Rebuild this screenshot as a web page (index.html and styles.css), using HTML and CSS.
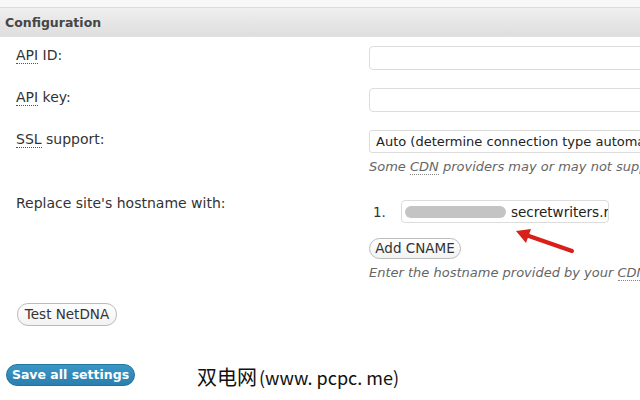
FILE: index.html
```html
<!DOCTYPE html>
<html>
<head>
<meta charset="utf-8">
<link rel="stylesheet" href="styles.css">
</head>
<body>
<div class="page">
  <div class="topstrip"></div>
  <div class="header">Configuration</div>
  <div class="form">
    <div class="row">
      <div class="label"><abbr>API</abbr> ID:</div>
      <div class="field"><div class="input"></div></div>
    </div>
    <div class="row">
      <div class="label"><abbr>API</abbr> key:</div>
      <div class="field"><div class="input"></div></div>
    </div>
    <div class="row">
      <div class="label"><abbr>SSL</abbr> support:</div>
      <div class="field">
        <div class="select">Auto (determine connection type automatically)</div>
        <div class="desc">Some <abbr>CDN</abbr> providers may or may not support SSL connections.</div>
      </div>
    </div>
    <div class="row">
      <div class="label">Replace site's hostname with:</div>
      <div class="field">
        <div class="cname">
          <span class="num">1.</span>
          <div class="cinput"><span class="blur"></span><span class="host">secretwriters.rocks</span></div>
        </div>
        <div class="btn add">Add CNAME</div>
        <div class="desc desc2">Enter the hostname provided by your <abbr>CDN</abbr> provider.</div>
      </div>
    </div>
    <div class="testrow"><span class="btn test">Test NetDNA</span></div>
    <div class="saverow"><span class="save">Save all settings</span></div>
  </div>
  <svg class="arrow" width="640" height="400" viewBox="0 0 640 400">
    <line x1="572" y1="251" x2="526" y2="235" stroke="#d81f1a" stroke-width="4" stroke-linecap="round"/>
    <polygon points="516,231 531,229 526,243" fill="#d81f1a"/>
  </svg>
  <div class="watermark"><span class="wm-cjk">双电网</span><span class="wm-lat">(www. pcpc. me)</span></div>
</div>
</body>
</html>
```
FILE: styles.css
```css
html, body {
  margin: 0;
  padding: 0;
  overflow: hidden;
  background: #fff;
}
.page {
  position: relative;
  width: 640px;
  height: 400px;
  overflow: hidden;
  font-family: "DejaVu Sans", Verdana, sans-serif;
  color: #333;
}
.topstrip {
  height: 7px;
  background: #f8f8f8;
  border-bottom: 1px solid #dcdcdc;
}
.header {
  height: 28px;
  line-height: 29px;
  padding-left: 5px;
  font-size: 12.5px;
  font-weight: bold;
  color: #464646;
  background: linear-gradient(#efefef, #dedede);
  border-bottom: 1px solid #e2e2e2;
}
.form {
  padding-top: 6px;
}
.row {
  display: flex;
  align-items: flex-start;
  padding-bottom: 15px;
}
.label {
  width: 353px;
  padding-left: 16px;
  padding-top: 3px;
  font-size: 14px;
  line-height: 18px;
  flex: none;
}
abbr {
  text-decoration: none;
  border-bottom: 1px dotted #555;
}
.field {
  flex: none;
  width: 300px;
}
.input {
  margin-top: 3px;
  height: 22px;
  width: 300px;
  border: 1px solid #dcdcdc;
  border-radius: 4px;
  background: #fff;
}
.select {
  margin-top: 3px;
  height: 21px;
  width: 340px;
  border: 1px solid #dcdcdc;
  border-radius: 3px;
  font-size: 13px;
  line-height: 21px;
  padding-left: 6px;
  white-space: nowrap;
  overflow: hidden;
  color: #222;
}
.desc {
  margin-top: 5px;
  font-size: 13px;
  line-height: 18px;
  font-style: italic;
  color: #666;
  white-space: nowrap;
}
.desc abbr {
  border-bottom-color: #888;
}
.cname {
  display: flex;
  align-items: center;
  margin-top: 9px;
}
.num {
  width: 32px;
  padding-left: 4px;
  font-size: 13.5px;
  box-sizing: border-box;
}
.cinput {
  width: 206px;
  height: 21px;
  border: 1px solid #dcdcdc;
  border-radius: 4px;
  display: flex;
  align-items: center;
  overflow: hidden;
  white-space: nowrap;
  font-size: 13.5px;
  color: #222;
}
.blur {
  flex: none;
  width: 101px;
  height: 12px;
  margin-left: 3px;
  margin-right: 5px;
  border-radius: 6px;
  background: #c4c4c4;
}
.host {
  flex: none;
}
.btn {
  display: inline-block;
  box-sizing: border-box;
  border: 1px solid #bbb;
  border-radius: 11px;
  background: linear-gradient(#fff, #f2f2f2);
  font-size: 13.5px;
  color: #333;
  text-align: center;
}
.add {
  margin-top: 15px;
  width: 92px;
  height: 21px;
  line-height: 19px;
}
.desc2 {
  margin-top: 5px;
}
.testrow {
  padding-top: 6px;
  padding-left: 17px;
}
.test {
  width: 100px;
  height: 23px;
  line-height: 21px;
}
.saverow {
  padding-top: 38px;
  padding-left: 6px;
}
.save {
  display: inline-block;
  box-sizing: border-box;
  width: 129px;
  height: 22px;
  line-height: 20px;
  text-align: center;
  border-radius: 11px;
  border: 1px solid #21759b;
  background: linear-gradient(#3a96c6, #2a7fae);
  color: #fff;
  font-weight: bold;
  font-size: 12.5px;
}
.arrow {
  position: absolute;
  left: 0;
  top: 0;
  pointer-events: none;
}
.watermark {
  position: absolute;
  left: 197px;
  top: 364px;
  font-family: "Noto Sans CJK SC", sans-serif;
  line-height: 26px;
  color: #111;
  white-space: nowrap;
}
.wm-cjk {
  font-size: 20px;
}
.wm-lat {
  font-size: 18px;
  margin-left: 2px;
}
```
